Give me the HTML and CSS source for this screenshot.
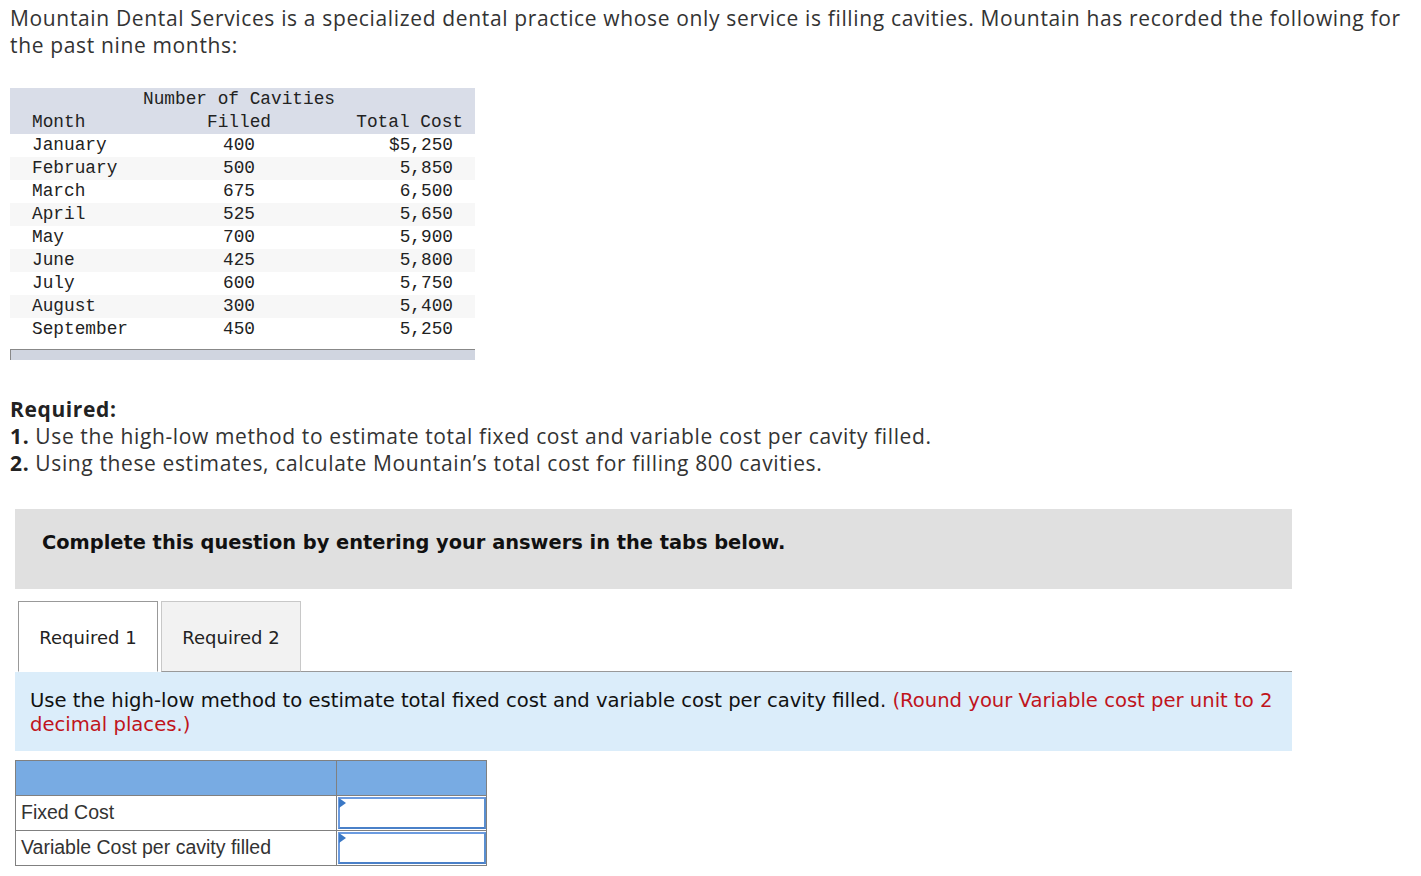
FILE: index.html
```html
<!DOCTYPE html>
<html>
<head>
<meta charset="utf-8">
<link rel="stylesheet" href="styles.css">
</head>
<body>
<p class="intro">Mountain Dental Services is a specialized dental practice whose only service is filling cavities. Mountain has recorded the following for the past nine months:</p>

<div class="data">
  <div class="data-head">
    <div class="h1"><span></span><span class="c2">Number of Cavities</span><span></span></div>
    <div class="h2"><span>Month</span><span class="c2">Filled</span><span class="c3">Total Cost</span></div>
  </div>
  <div class="row"><span>January</span><span class="c2">400</span><span class="c3">$5,250</span></div>
  <div class="row alt"><span>February</span><span class="c2">500</span><span class="c3">5,850</span></div>
  <div class="row"><span>March</span><span class="c2">675</span><span class="c3">6,500</span></div>
  <div class="row alt"><span>April</span><span class="c2">525</span><span class="c3">5,650</span></div>
  <div class="row"><span>May</span><span class="c2">700</span><span class="c3">5,900</span></div>
  <div class="row alt"><span>June</span><span class="c2">425</span><span class="c3">5,800</span></div>
  <div class="row"><span>July</span><span class="c2">600</span><span class="c3">5,750</span></div>
  <div class="row alt"><span>August</span><span class="c2">300</span><span class="c3">5,400</span></div>
  <div class="row"><span>September</span><span class="c2">450</span><span class="c3">5,250</span></div>
  <div class="data-foot"></div>
</div>

<div class="required">
  <div class="req-title">Required:</div>
  <div><b>1.</b> Use the high-low method to estimate total fixed cost and variable cost per cavity filled.</div>
  <div><b>2.</b> Using these estimates, calculate Mountain’s total cost for filling 800 cavities.</div>
</div>

<div class="panel">
  <div class="complete">Complete this question by entering your answers in the tabs below.</div>
  <div class="tabs">
    <div class="tab active">Required 1</div>
    <div class="tab">Required 2</div>
    <div class="tab-rest"></div>
  </div>
  <p class="instr">Use the high-low method to estimate total fixed cost and variable cost per cavity filled. <span class="red">(Round your Variable cost per unit to 2 decimal places.)</span></p>
</div>

<div class="answer">
  <div class="ans-row head"><div class="lab"></div><div class="val"></div></div>
  <div class="ans-row"><div class="lab">Fixed Cost</div><div class="val"><div class="inp"></div></div></div>
  <div class="ans-row"><div class="lab">Variable Cost per cavity filled</div><div class="val"><div class="inp"></div></div></div>
</div>
</body>
</html>
```
FILE: styles.css
```css
* { box-sizing: border-box; }
body {
  margin: 0;
  padding: 0 10px;
  font-family: "Open Sans", "Liberation Sans", sans-serif;
  color: #333;
  background: #fff;
}
.intro {
  margin: 5px 0 0 0;
  font-size: 21px;
  line-height: 27px;
  letter-spacing: 0.65px;
  width: 1411px;
}
.data {
  margin-top: 29px;
  width: 465px;
  font-family: "Liberation Mono", "DejaVu Sans Mono", monospace;
  font-size: 17.8px;
  color: #222;
}
.data-head {
  background: #d9dde8;
}
.h1, .h2, .row {
  display: grid;
  grid-template-columns: 140px 134px 1fr;
  height: 23px;
  line-height: 23px;
  padding-left: 22px;
  white-space: nowrap;
}
.c2 { text-align: center; }
.h1 .c2 { display: flex; justify-content: center; }
.c3 { text-align: right; padding-right: 22px; }
.h2 .c3 { padding-right: 12px; }
.row.alt { background: #f7f7f7; }
.data-foot {
  margin-top: 8px;
  height: 11px;
  background: #d0d5e0;
  border-top: 1px solid #888;
  border-left: 1px solid #888;
}
.required {
  margin-top: 36px;
  font-size: 21px;
  line-height: 27px;
  letter-spacing: 0.62px;
}
.req-title, .required b { font-weight: 700; color: #222; }
.panel {
  margin-top: 32px;
  margin-left: 5px;
  width: 1277px;
}
.complete {
  background: #e0e0e0;
  height: 80px;
  padding: 22px 0 0 27px;
  font-family: "DejaVu Sans", Verdana, sans-serif;
  font-weight: 700;
  font-size: 19.4px;
  color: #111;
}
.tabs {
  display: flex;
  margin-top: 12px;
  height: 71px;
}
.tab {
  width: 140px;
  border: 1px solid #c8c8c8;
  border-bottom: 1px solid #999;
  background: #f2f2f2;
  font-family: "DejaVu Sans", Verdana, sans-serif;
  font-size: 18px;
  color: #222;
  display: flex;
  align-items: center;
  justify-content: center;
  padding-top: 2px;
  margin-right: 3px;
}
.tab.active {
  background: #fff;
  border-color: #999;
  border-bottom: 1px solid #fff;
  margin-left: 3px;
}
.tab-rest {
  flex: 1;
  border-bottom: 1px solid #999;
  margin-left: -3px;
}
.instr {
  margin: 0;
  background: #dbedfa;
  height: 79px;
  padding: 17px 15px 0 15px;
  font-family: "DejaVu Sans", Verdana, sans-serif;
  font-size: 19.6px;
  line-height: 24px;
  color: #111;
}
.red { color: #c0141c; }
.answer {
  margin-top: 9px;
  margin-left: 5px;
  width: 472px;
  border: 1px solid #808080;
  border-bottom: none;
  font-family: "Liberation Sans", Arial, sans-serif;
  font-size: 19.5px;
  color: #333;
}
.ans-row {
  display: flex;
  height: 35px;
  border-bottom: 1px solid #808080;
}
.ans-row.head { background: #78abe3; height: 35px; }
.lab {
  width: 321px;
  border-right: 1px solid #808080;
  padding-left: 5px;
  line-height: 33px;
}
.val { flex: 1; padding: 1px 0 1px 1px; }
.inp {
  height: 100%;
  border: 2px solid #5a8fd0;
  border-color: #6b9be0 #5a8fd0 #4a80c8 #6b9be0;
  position: relative;
  background: #fff;
}
.inp::before {
  content: "";
  position: absolute;
  left: -1px;
  top: -1px;
  border-left: 7px solid #3b78c5;
  border-top: 5px solid transparent;
  border-bottom: 5px solid transparent;
}
```
